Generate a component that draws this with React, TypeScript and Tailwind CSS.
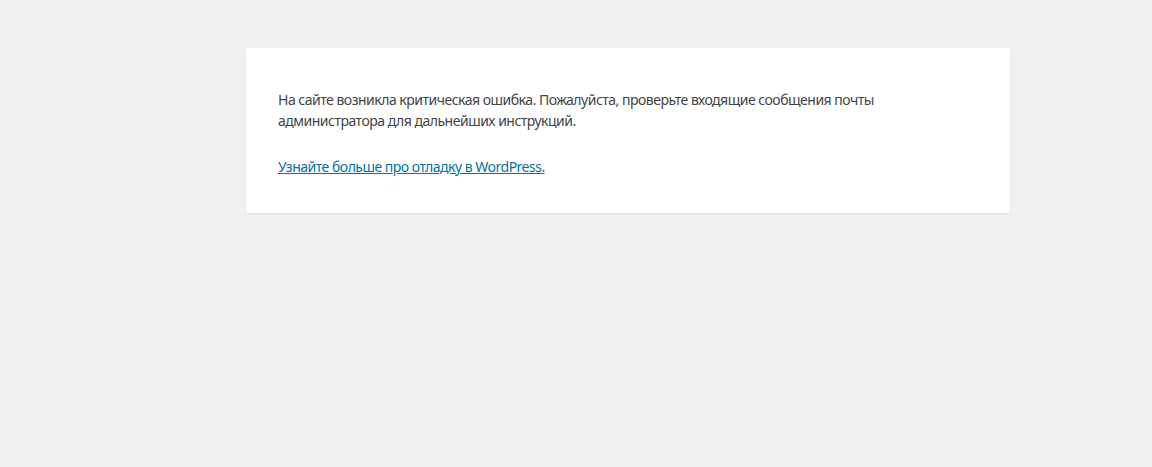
export default function App() {
  return (
    <div className="min-h-[467px] w-full bg-[#f1f1f1] pt-[48px] font-['Noto_Sans','Open_Sans',sans-serif]">
      <div className="ml-[246px] w-[764px] bg-white px-[32px] py-[16px] shadow-[0_1px_2px_rgba(0,0,0,0.08)]">
        <div className="text-[14px] leading-[21px] tracking-[-0.5px] text-[#444]">
          <p className="mt-[25px] mb-[25px]">
            На сайте возникла критическая ошибка. Пожалуйста, проверьте входящие сообщения почты администратора для дальнейших инструкций.
          </p>
          <p className="mb-[20px]">
            <a href="#" className="text-[#0073aa] underline">
              Узнайте больше про отладку в WordPress.
            </a>
          </p>
        </div>
      </div>
    </div>
  );
}
